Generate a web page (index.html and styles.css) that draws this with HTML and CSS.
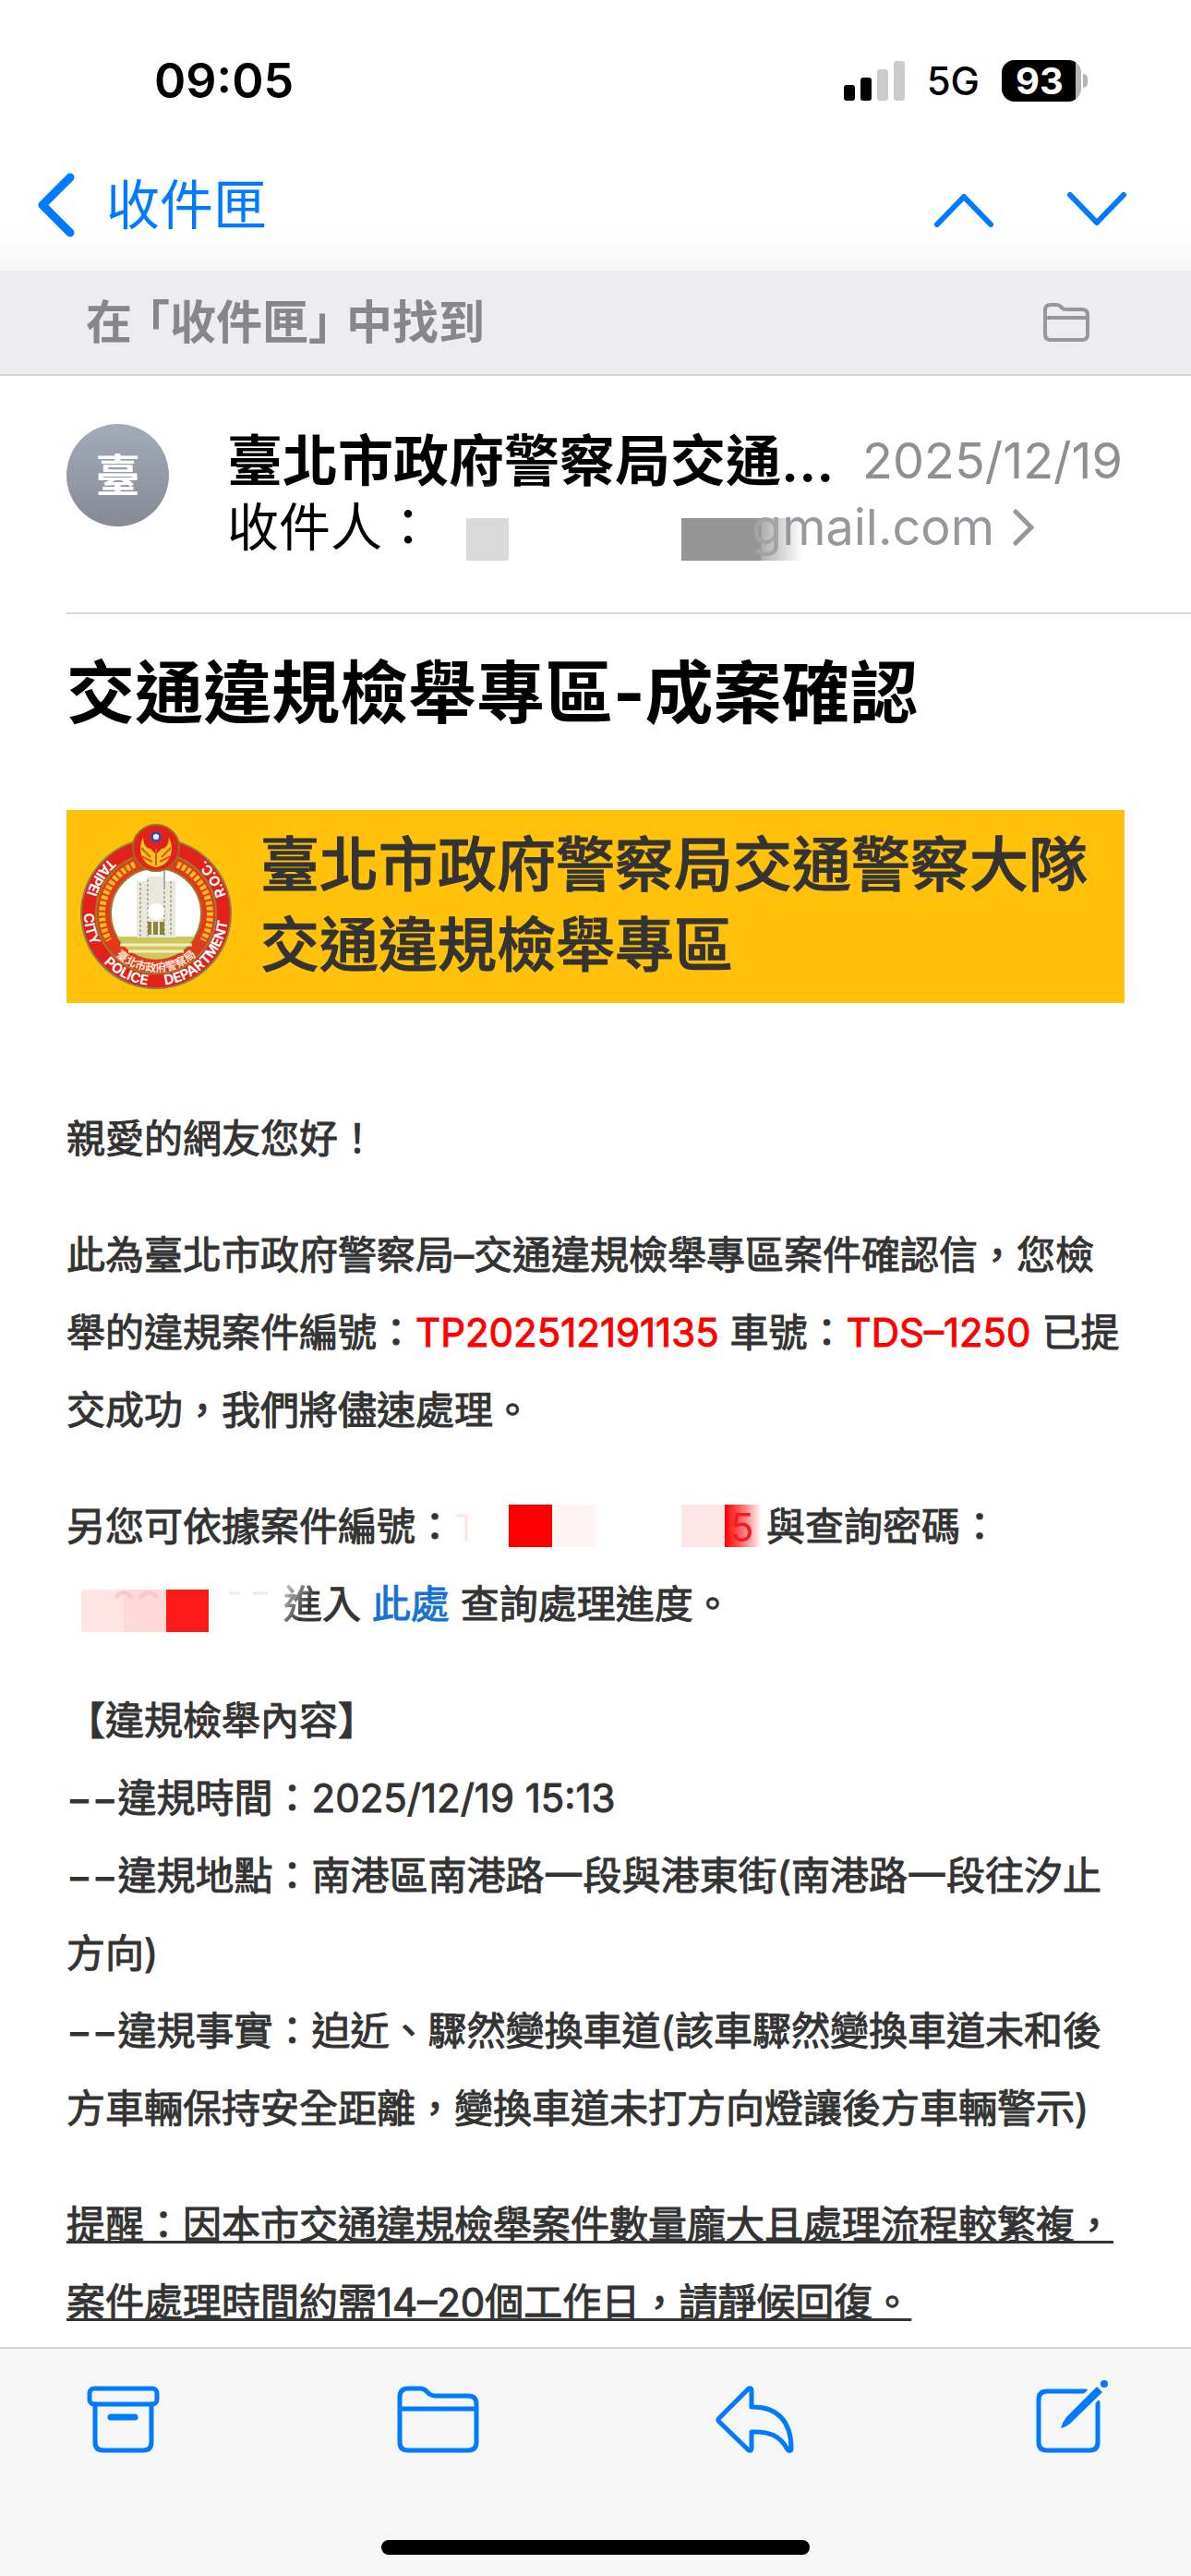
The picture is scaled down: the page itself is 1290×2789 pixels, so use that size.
FILE: index.html
```html
<!DOCTYPE html>
<html lang="zh-Hant">
<head>
  <meta charset="UTF-8" />
  <meta name="viewport" content="width=device-width, initial-scale=1.0"/>
  <title>交通違規檢舉專區-成案確認</title>
  <link rel="stylesheet" href="styles.css">
</head>
<body>

  <!-- Status bar -->
  <div class="status-bar">
    <time class="clock">09:05</time>
    <div class="status-icons">
      <svg class="signal" viewBox="0 0 66 43" width="66" height="43">
        <rect x="0" y="26" width="12" height="17" rx="3"/>
        <rect x="18" y="18" width="12" height="25" rx="3"/>
        <rect x="36" y="9" width="12" height="34" rx="3" fill="#cbcbcb"/>
        <rect x="54" y="0" width="12" height="43" rx="3" fill="#cbcbcb"/>
      </svg>
      <span class="network">5G</span>
      <div class="battery"><span>93</span></div>
    </div>
  </div>

  <!-- Navigation -->
  <nav class="nav-bar">
    <a href="#" class="back">
      <svg viewBox="0 0 41 70" width="41" height="70"><path d="M36 5 6 35l30 30" stroke-width="9"/></svg>
      <span>收件匣</span>
    </a>
    <div class="nav-arrows">
      <button aria-label="上一封"><svg viewBox="0 0 64 38" width="64" height="38"><path d="M3 35 32 5l29 30"/></svg></button>
      <button aria-label="下一封"><svg viewBox="0 0 64 38" width="64" height="38"><path d="m3 3 29 30L61 3"/></svg></button>
    </div>
  </nav>

  <div class="found-bar">
    <span class="found-text">在<span class="open">「</span>收件匣<span class="close">」</span>中找到</span>
    <svg viewBox="0 0 50 42" width="50" height="42">
      <path d="M2 8q0-6 6-6h6q3 0 5 2l2 2q1 1 4 1h17q6 0 6 6v21q0 6-6 6H8q-6 0-6-6zM2 16h46"/>
    </svg>
  </div>

  <!-- Sender -->
  <header class="mail-header">
    <div class="avatar">臺</div>
    <div class="mail-info">
      <div class="from-row">
        <strong>臺北市政府警察局交通...</strong>
        <time>2025/12/19</time>
      </div>
      <div class="to-row">
        <span>收件人：</span>
        <svg class="to-mask" viewBox="0 0 400 100" width="400" height="100">
          <defs>
            <linearGradient id="grayFade"><stop offset="0" stop-color="#959595"/><stop offset=".65" stop-color="#959595"/><stop offset=".66" stop-color="#b0b0b0"/><stop offset="1" stop-color="#fff"/></linearGradient>
            <linearGradient id="whiteFade" x2="0" y2="1"><stop offset="0" stop-color="#fff" stop-opacity="0"/><stop offset="1" stop-color="#fff" stop-opacity=".7"/></linearGradient>
          </defs>
          <rect x="17" y="0" width="70" height="22" rx="6" fill="url(#whiteFade)"/>
          <rect x="35" y="40" width="46" height="46" fill="#dadada"/>
          <rect x="268" y="40" width="132" height="46" fill="url(#grayFade)"/>
        </svg>
        <span class="address"><span class="faded">g</span>mail.com</span>
        <svg class="chevron" viewBox="0 0 24 40" width="24" height="40"><path d="m3 3 17 17L3 37"/></svg>
      </div>
    </div>
  </header>

  <main class="mail-body">
    <h1>交通違規檢舉專區-成案確認</h1>

    <div class="dept-banner">
      <svg class="emblem" viewBox="0 0 166 180" width="166" height="180">
        <defs>
          <path id="outerRing" d="M83 19a78 78 0 0 0 0 156a78 78 0 0 0 0-156"/>
          <path id="innerRing" d="M83 34a63 63 0 0 0 0 126a63 63 0 0 0 0-126"/>
        </defs>
        <circle cx="83" cy="97" r="81" fill="#e2211b" stroke="#8f8043" stroke-width="2"/>
        <circle cx="83" cy="97" r="65" fill="#df3a1c" stroke="#9c7d2c" stroke-width="2"/>
        <path d="M60 44a58 58 0 0 0-28 82M106 44a58 58 0 0 1 28 82" fill="none" stroke="#f6bd1c" stroke-width="7" stroke-dasharray="4 2"/>
        <circle cx="83" cy="97" r="49" fill="#fff" stroke="#9c7d2c" stroke-width="2"/>
        <path d="M41 122h84a48 48 0 0 1-84 0z" fill="#cfc75c"/>
        <path d="M44 131h78M53 138h60" stroke="#f3efbd" stroke-width="3"/>
        <path d="M62 62h12v-5h18v5h12v61H62z" fill="#e9e8dc"/>
        <path d="M66 64v58M74 60v62M92 58v64M99 62v60" stroke="#b5b198" stroke-width="2" stroke-dasharray="3 2"/>
        <path d="M92 48v20" stroke="#aaa" stroke-width="2"/>
        <path d="M74 106h18v14H74z" fill="#8b833e"/>
        <path d="M79 106v14M86 106v14" stroke="#e9e8dc" stroke-width="2"/>
        <circle cx="83" cy="95" r="9" fill="#fff"/>
        <circle cx="83" cy="26" r="25" fill="#e2211b" stroke="#9c6b22" stroke-width="2"/>
        <path d="M69 14q-6 14 0 24 5 8 14 9 9-1 14-9 6-10 0-24 0 12-8 13l-6 6-6-6q-8-1-8-13z" fill="#f6c21e"/>
        <path d="M67 26l10 10M67 35l12 6M99 26 89 36M99 35l-12 6M83 27v18" stroke="#d9541b" stroke-width="2"/>
        <circle cx="83" cy="14" r="6" fill="#3b4bb0"/>
        <circle cx="83" cy="14" r="3" fill="#fff"/>
        <g class="ring-text">
          <text><textPath href="#outerRing" startOffset="11%">TAIPEI</textPath></text>
          <text><textPath href="#outerRing" startOffset="25%">CITY</textPath></text>
          <text><textPath href="#outerRing" startOffset="37%">POLICE</textPath></text>
          <text><textPath href="#outerRing" startOffset="52%">DEPARTMENT</textPath></text>
          <text><textPath href="#outerRing" startOffset="79%">R.O.C.</textPath></text>
        </g>
        <text class="ring-name"><textPath href="#innerRing" startOffset="50%">臺北市政府警察局</textPath></text>
      </svg>
      <div class="dept-name">臺北市政府警察局交通警察大隊<br>交通違規檢舉專區</div>
    </div>

    <div class="content">
      <p>親愛的網友您好！</p>
      <p>此為臺北市政府警察局–交通違規檢舉專區案件確認信，您檢舉的違規案件編號：<span class="red">TP202512191135</span> 車號：<span class="red">TDS–1250</span> 已提交成功，我們將儘速處理。</p>
      <p>另您可依據案件編號：<svg class="mask" viewBox="0 0 338 60" width="338" height="60">
          <defs>
            <linearGradient id="redFade"><stop offset="0" stop-color="#f00"/><stop offset=".4" stop-color="#ff5a5a"/><stop offset="1" stop-color="#fff"/></linearGradient>
          </defs>
          <path d="M2 14h11v28" fill="none" stroke="#ffe3e3" stroke-width="3"/>
          <rect x="59" y="2" width="47" height="46" fill="#f00"/>
          <rect x="106" y="2" width="47" height="46" fill="#fff4f4"/>
          <rect x="246" y="2" width="47" height="46" fill="#ffe6e6"/>
          <rect x="293" y="2" width="40" height="46" fill="url(#redFade)"/>
          <text x="299" y="42" fill="#ee1c1c">5</text>
        </svg>與查詢密碼：<br><svg class="mask" viewBox="0 0 235 60" width="235" height="60">
          <rect x="16" y="10" width="46" height="46" fill="#ffe4e4"/>
          <rect x="62" y="10" width="46" height="46" fill="#ffd9d9"/>
          <path d="M54 19q6-12 17 0M80 19q8-12 19 0" fill="none" stroke="#ffc4c4" stroke-width="4"/>
          <rect x="108" y="10" width="46" height="46" fill="#ff1a1a"/>
          <path d="M176 14h12M202 14h16" stroke="#ffe3e3" stroke-width="3"/>
        </svg><span class="smudged">進</span>入 <a href="#">此處</a> 查詢處理進度。</p>
      <p>【違規檢舉內容】<br>
        −−違規時間：2025/12/19 15:13<br>
        −−違規地點：南港區南港路一段與港東街(南港路一段往汐止方向)<br>
        −−違規事實：迫近、驟然變換車道(該車驟然變換車道未和後方車輛保持安全距離，變換車道未打方向燈讓後方車輛警示)</p>
      <p class="reminder">提醒：因本市交通違規檢舉案件數量龐大且處理流程較繁複，案件處理時間約需14–20個工作日，請靜候回復。</p>
    </div>
  </main>

  <!-- Bottom toolbar -->
  <footer class="toolbar">
    <div class="tools">
      <button aria-label="封存"><svg viewBox="0 0 79 73" width="79" height="73">
        <rect x="3" y="3" width="73" height="17" rx="5"/>
        <path d="M9 20v41q0 9 9 9h43q9 0 9-9V20"/>
        <path d="M26 34h26" stroke-width="7"/>
      </svg></button>
      <button aria-label="移動"><svg viewBox="0 0 89 73" width="89" height="73">
        <path d="M3 12q0-9 9-9h13q4 0 7 3l3 3q3 2 7 2h35q9 0 9 9v41q0 9-9 9H12q-9 0-9-9zM3 25h83"/>
      </svg></button>
      <button aria-label="回覆"><svg viewBox="0 0 90 73" width="90" height="73">
        <path d="M36 3q3-1 3 2v18c28-1 43 16 43 45 0 3-3 3-4 1-8-15-20-20-39-19v18q0 3-3 2L4 39q-2-2 0-4z"/>
      </svg></button>
      <button aria-label="撰寫"><svg viewBox="0 0 78 79" width="78" height="79">
        <path d="M54 12H12q-9 0-9 9v46q0 9 9 9h46q9 0 9-9V24"/>
        <path class="gap" d="M40 38 74 4"/>
        <path class="pencil" d="m66 7 6 6-34 33q-4 4-11 6 2-7 6-12z"/>
        <circle class="pencil" cx="74" cy="4" r="4"/>
      </svg></button>
    </div>
    <div class="home-indicator"></div>
  </footer>

</body>
</html>
```
FILE: styles.css
```css
:root {
  --blue: #007aff;
  --gray: #8e8e93;
  --text-color: #333;
  --side: 72px;
}

* {
  box-sizing: border-box;
}

body {
  margin: 0;
  min-height: 100vh;
  display: flex;
  flex-direction: column;
  font-family: Inter, "Noto Sans CJK TC", sans-serif;
  background-color: #fff;
  color: #000;
}

svg {
  display: block;
  flex: none;
}

button {
  padding: 0;
  border: none;
  background: none;
  cursor: pointer;
}

/* Status bar */
.status-bar {
  display: flex;
  justify-content: space-between;
  align-items: center;
  height: 174px;
  padding: 0 119px 0 167px;
}

.clock {
  font-size: 52px;
  font-weight: 600;
}

.status-icons {
  display: flex;
  align-items: center;
  gap: 24px;
}

.network {
  font-size: 42px;
  font-weight: 500;
}

.battery {
  position: relative;
  width: 86px;
  height: 45px;
  border-radius: 14px;
  background: linear-gradient(90deg, #000 93%, #b5b5b5 93%);
  color: #fff;
  font-size: 40px;
  font-weight: 700;
  line-height: 45px;
  text-align: center;
}

.battery span {
  margin-right: 4px;
}

.battery::after {
  content: "";
  position: absolute;
  right: -7px;
  top: 15px;
  width: 5px;
  height: 15px;
  border-radius: 0 5px 5px 0;
  background: #b5b5b5;
}

/* Navigation */
.nav-bar {
  display: flex;
  justify-content: space-between;
  height: 119px;
  padding: 0 70px 23px 40px;
  background: linear-gradient(0deg, #f7f7f7, #fff 44px);
}

.nav-bar svg {
  fill: none;
  stroke: var(--blue);
  stroke-width: 6;
  stroke-linecap: round;
  stroke-linejoin: round;
}

.back {
  display: flex;
  align-items: center;
  gap: 34px;
  color: var(--blue);
  font-size: 58px;
  line-height: 84px;
  text-decoration: none;
}

.nav-arrows {
  display: flex;
  align-items: center;
  gap: 80px;
  padding-top: 10px;
}

.found-bar {
  display: flex;
  justify-content: space-between;
  align-items: center;
  height: 114px;
  padding: 0 110px 0 93px;
  background: #ededf0;
  border-bottom: 2px solid #d3d3d6;
  color: #86868b;
  font-size: 50px;
  font-weight: 600;
}

.found-text {
  padding-bottom: 8px;
}

.found-bar svg {
  fill: none;
  stroke: #98989c;
  stroke-width: 4;
}

.open,
.close {
  font-feature-settings: "halt";
}

.open {
  margin-left: 16px;
}

.close {
  margin-right: 16px;
}

/* Sender */
.mail-header {
  display: flex;
  gap: 63px;
  margin-left: var(--side);
  padding: 52px 74px 56px 0;
  border-bottom: 2px solid #dcdcde;
}

.avatar {
  flex: none;
  width: 111px;
  height: 111px;
  border-radius: 50%;
  background: linear-gradient(#a4abb9, #858a95);
  color: #fff;
  font-size: 48px;
  font-weight: 600;
  line-height: 111px;
  text-align: center;
}

.mail-info {
  flex: 1;
  padding-top: 4px;
}

.from-row,
.to-row {
  display: flex;
  align-items: center;
  height: 72px;
  line-height: 72px;
  white-space: nowrap;
}

.from-row {
  justify-content: space-between;
  font-size: 60px;
}

.from-row strong {
  font-weight: 600;
}

.from-row time {
  color: var(--gray);
  font-size: 54px;
}

.to-row {
  font-size: 56px;
}

.to-mask {
  margin-right: -56px;
  position: relative;
}

.address {
  position: relative;
  color: #98989c;
  font-size: 54px;
}

.faded {
  color: #a3a3a6;
}

.chevron {
  margin-left: 20px;
  fill: none;
  stroke: #98989c;
  stroke-width: 5;
  stroke-linecap: round;
}

/* Message */
.mail-body {
  flex: 1;
  padding: 41px var(--side) 6px;
}

h1 {
  margin: 0 0 83px;
  font-size: 74px;
  font-weight: 700;
  line-height: 88px;
}

.dept-banner {
  display: flex;
  align-items: center;
  gap: 30px;
  height: 209px;
  padding-left: 14px;
  background: #ffc10a;
}

.dept-name {
  padding-bottom: 6px;
  color: var(--text-color);
  font-size: 64px;
  font-weight: 500;
  line-height: 87px;
  -webkit-text-stroke: 1px var(--text-color);
}

.ring-text {
  fill: #fff;
  font-size: 15px;
  font-weight: 700;
}

.ring-name {
  fill: #ffe9dc;
  font-size: 12px;
  font-weight: 700;
  text-anchor: middle;
}

.content {
  margin-top: 105px;
  color: var(--text-color);
  font-size: 42px;
  line-height: 84px;
  -webkit-text-stroke: 1px;
}

.content p {
  margin: 0 0 42px;
}

.content p:last-child {
  margin-bottom: 0;
}

.red {
  color: #f00;
}

.mask {
  display: inline-block;
  margin: -10px 0;
  vertical-align: middle;
}

.content a {
  color: #1673d1;
  text-decoration: none;
}

.smudged {
  background: linear-gradient(120deg, #ddd, var(--text-color) 60%);
  background-clip: text;
  color: transparent;
}

.reminder {
  text-decoration: underline;
  text-decoration-thickness: 3px;
}

/* Bottom toolbar */
.toolbar {
  height: 249px;
  padding-top: 34px;
  background: #f6f6f6;
  border-top: 2px solid #d5d5d5;
}

.tools {
  display: flex;
  justify-content: space-between;
  align-items: flex-end;
  padding: 0 90px 0 94px;
}

.tools svg {
  fill: none;
  stroke: var(--blue);
  stroke-width: 5;
  stroke-linecap: round;
  stroke-linejoin: round;
}

.tools .pencil {
  fill: var(--blue);
  stroke: none;
}

.tools .gap {
  stroke: #f6f6f6;
  stroke-width: 16;
  stroke-linecap: butt;
}

.home-indicator {
  width: 36%;
  height: 16px;
  margin: 94px auto 0;
  border-radius: 8px;
  background: #000;
}
```
